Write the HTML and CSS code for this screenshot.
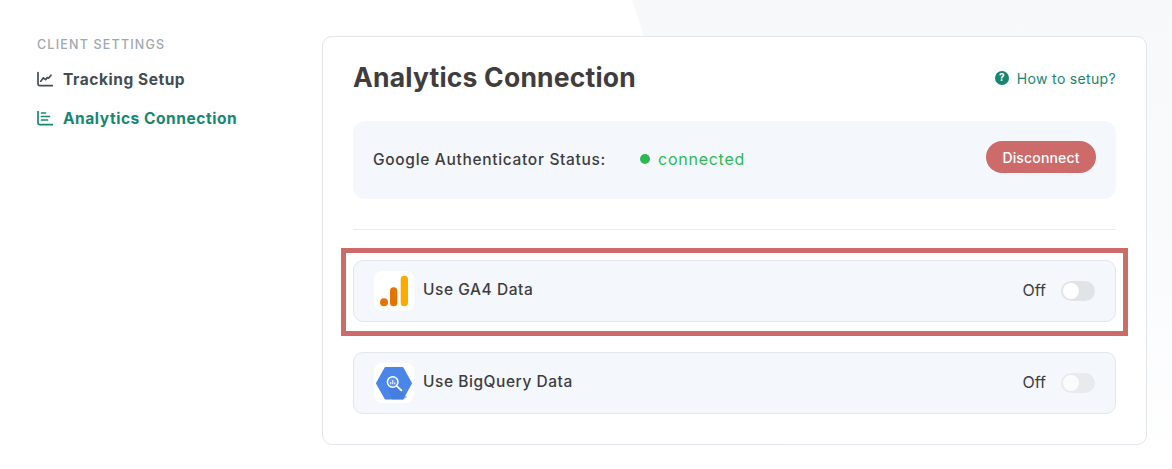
FILE: index.html
```html
<!DOCTYPE html>
<html lang="en">
<head>
<meta charset="utf-8">
<title>Analytics Connection</title>
<link rel="stylesheet" href="styles.css">
</head>
<body>
<div class="bg-shape"></div>
<div class="page">
  <aside class="sidebar">
    <div class="side-label">CLIENT SETTINGS</div>
    <a class="side-item">
      <svg class="side-icon" viewBox="0 0 16 16" fill="none" stroke="currentColor" stroke-width="1.7" stroke-linecap="round" stroke-linejoin="round"><path d="M1 1.500V13a1.600 1.600 0 0 0 1.600 1.600H15.300"/><path d="M3.800 10.200 6.400 6.800l2.200 1.800 1.700-2 1.200.6 2.500-3"/></svg>
      <span>Tracking Setup</span>
    </a>
    <a class="side-item active">
      <svg class="side-icon" viewBox="0 0 16 16" fill="none" stroke="currentColor" stroke-width="1.700" stroke-linecap="round" stroke-linejoin="round"><path d="M1 1.500V13a1.600 1.600 0 0 0 1.600 1.600H15.300"/><path d="M4.500 3h4M4.500 6.500h8M4.500 10h6"/></svg>
      <span>Analytics Connection</span>
    </a>
  </aside>
  <main class="card">
    <header class="card-head">
      <h1>Analytics Connection</h1>
      <a class="help">
        <svg class="help-icon" viewBox="0 0 14 14"><circle cx="7" cy="7" r="7" fill="#17866f"/><text x="7" y="10.400" text-anchor="middle" class="help-mark">?</text></svg>
        <span>How to setup?</span>
      </a>
    </header>
    <section class="status">
      <span class="status-label">Google Authenticator Status:</span>
      <span class="status-value"><i class="dot"></i>connected</span>
      <button class="disconnect">Disconnect</button>
    </section>
    <hr class="divider">
    <div class="row">
      <span class="logo">
        <svg viewBox="0 0 40 40" width="40" height="40"><rect x="26.700" y="4.700" width="7.300" height="30.600" rx="3.600" fill="#fbab00"/><rect x="16" y="16.300" width="7.300" height="19" rx="3.600" fill="#e37400"/><circle cx="10" cy="31.300" r="4" fill="#e37400"/></svg>
      </span>
      <span class="row-label">Use GA4 Data</span>
      <span class="off">Off</span>
      <span class="toggle"><i></i></span>
    </div>
    <div class="row muted">
      <span class="logo">
        <svg viewBox="0 0 40 40" width="40" height="40">
          <polygon points="3,20.200 11.500,5 28.500,5 37,20.200 28.500,35.500 11.500,35.500" fill="#4a86e8" stroke="#4a86e8" stroke-width="2" stroke-linejoin="round"/>
          <path d="M22.500 23.500 33 34l-3.500 2.500H18L14 25z" fill="#3f78d6" opacity=".55"/>
          <circle cx="18.700" cy="19" r="5.300" fill="#5a93ec" stroke="#fff" stroke-width="1.500"/>
          <path d="M22.800 23.100l4.600 4.300" stroke="#fff" stroke-width="1.800" stroke-linecap="round"/>
          <path d="M16.800 19v2.200M18.800 17v4.200M20.800 19.500v1.700" stroke="#fff" stroke-width="1"/>
        </svg>
      </span>
      <span class="row-label">Use BigQuery Data</span>
      <span class="off">Off</span>
      <span class="toggle"><i></i></span>
    </div>
    <div class="marker"></div>
  </main>
</div>
</body>
</html>
```

FILE: styles.css
```css
* { box-sizing: border-box; }
html, body { margin: 0; height: 100%; overflow: hidden; }
body {
  background: #fff;
  font-family: Inter, "Open Sans", "Liberation Sans", sans-serif;
  color: #3d3d40;
  position: relative;
}
.bg-shape {
  position: absolute;
  inset: 0;
  background: linear-gradient(to bottom, #f6f8fa 0%, #fafbfd 60%, #fff 100%);
  clip-path: polygon(632px 0, 100% 0, 100% 100%, 790px 100%);
}
.page {
  position: relative;
  display: flex;
  align-items: flex-start;
  padding-top: 36px;
}
.sidebar {
  width: 322px;
  flex: none;
  padding-left: 37px;
}
.side-label {
  font-size: 12.500px;
  line-height: 17px;
  font-weight: 500;
  letter-spacing: 1.200px;
  color: #9da8af;
  margin-bottom: 14px;
}
.side-item {
  display: flex;
  align-items: center;
  gap: 10px;
  height: 24px;
  margin-bottom: 15px;
  font-size: 15.500px;
  font-weight: 700;
  letter-spacing: .55px;
  color: #454c52;
}
.side-item.active { color: #17866f; }
.side-icon { width: 16px; height: 16px; flex: none; }
.card {
  position: relative;
  width: 825px;
  height: 409px;
  flex: none;
  background: #fff;
  border: 1px solid #e3e6ea;
  border-radius: 10px;
  padding: 23px 30px 0;
}
.card-head {
  display: flex;
  align-items: center;
  justify-content: space-between;
  height: 36px;
  margin-bottom: 25px;
}
h1 {
  margin: 0;
  padding-bottom: 3px;
  font-size: 26.500px;
  line-height: 36px;
  font-weight: 700;
  color: #3f3d3e;
  letter-spacing: .2px;
}
.help {
  display: flex;
  align-items: center;
  gap: 8px;
  font-size: 14px;
  color: #17866f;
  letter-spacing: .33px;
}
.help-icon { width: 14px; height: 14px; }
.help-mark { fill: #fff; font-size: 10px; font-weight: 700; }
.status {
  display: flex;
  align-items: center;
  height: 78px;
  padding: 0 20px 2px;
  background: #f4f7fb;
  border-radius: 12px;
}
.status-label {
  width: 267px;
  font-size: 15.500px;
  font-weight: 500;
  letter-spacing: .68px;
  color: #3d3d40;
}
.status-value {
  display: flex;
  align-items: center;
  gap: 8px;
  font-size: 16px;
  color: #2fb952;
  letter-spacing: .75px;
}
.dot {
  width: 10px;
  height: 10px;
  border-radius: 50%;
  background: #2fb952;
}
.disconnect {
  margin-left: auto;
  margin-bottom: 4px;
  width: 110px;
  height: 32px;
  border: 0;
  padding: 0;
  border-radius: 16px;
  background: #cd6b6b;
  color: #fff;
  font: 500 14px Inter, "Open Sans", sans-serif;
  letter-spacing: .15px;
}
.divider {
  height: 1px;
  border: 0;
  margin: 30px 0;
  background: #e8eaed;
}
.row {
  display: flex;
  align-items: center;
  height: 62px;
  padding: 0 20px;
  margin-bottom: 30px;
  background: #f4f7fb;
  border: 1px solid #e3e6ea;
  border-radius: 10px;
}
.logo {
  width: 40px;
  height: 40px;
  flex: none;
  background: #fff;
  border-radius: 8px;
  margin-right: 9px;
}
.logo svg { display: block; }
.row-label {
  margin-bottom: 4px;
  font-size: 15.500px;
  font-weight: 500;
  letter-spacing: .55px;
  color: #3d3d40;
}
.off {
  margin-left: auto;
  margin-right: 15px;
  margin-bottom: 2px;
  font-size: 16px;
  color: #3d3d40;
}
.toggle {
  display: flex;
  align-items: center;
  width: 34px;
  height: 20px;
  padding: 2px;
  border-radius: 10px;
  background: #e1e4e7;
}
.toggle i {
  width: 16px;
  height: 16px;
  border-radius: 50%;
  background: #fff;
}
.muted .toggle { opacity: .6; }
.marker {
  position: absolute;
  left: 18px;
  top: 211px;
  width: 787px;
  height: 88px;
  border: 5px solid #cd6b6b;
  pointer-events: none;
}
```
